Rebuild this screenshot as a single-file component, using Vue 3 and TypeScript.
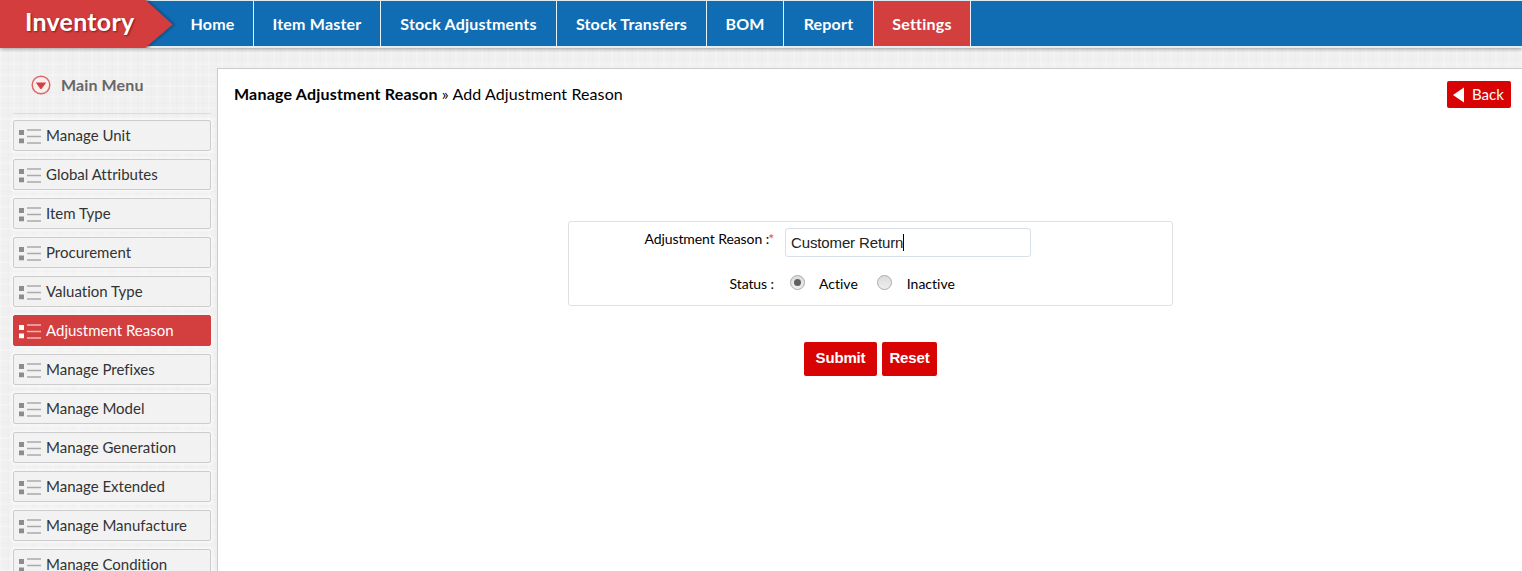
<script setup lang="ts">
import { ref } from 'vue'

interface NavItem {
  label: string
  width: number
  active?: boolean
}

const navItems: NavItem[] = [
  { label: 'Home', width: 82 },
  { label: 'Item Master', width: 127 },
  { label: 'Stock Adjustments', width: 176 },
  { label: 'Stock Transfers', width: 150 },
  { label: 'BOM', width: 77 },
  { label: 'Report', width: 90 },
  { label: 'Settings', width: 97, active: true },
]

const menuItems: string[] = [
  'Manage Unit',
  'Global Attributes',
  'Item Type',
  'Procurement',
  'Valuation Type',
  'Adjustment Reason',
  'Manage Prefixes',
  'Manage Model',
  'Manage Generation',
  'Manage Extended',
  'Manage Manufacture',
  'Manage Condition',
]
const currentMenu = ref('Adjustment Reason')
const status = ref('Active')
const statuses = ['Active', 'Inactive']
const reason = ref('Customer Return')
</script>

<template>
  <div class="page">
    <header class="topbar">
      <div class="brand">
        <svg class="brand-shape" width="182" height="48" viewBox="0 0 182 48">
          <defs>
            <filter id="brandShadow" x="-5%" y="-20%" width="115%" height="140%">
              <feDropShadow dx="2" dy="0" stdDeviation="1.5" flood-color="#10304c" flood-opacity="0.65" />
            </filter>
          </defs>
          <path d="M-6 -6H138L145.500 0L172.500 24.500L145 48L138 54H-6Z" fill="#d33e3e" filter="url(#brandShadow)" />
        </svg>
        <span class="brand-name">Inventory</span>
      </div>
      <nav class="nav">
        <a
          v-for="item in navItems"
          :key="item.label"
          class="nav-item"
          :class="{ active: item.active }"
          :style="{ width: item.width + 'px' }"
        >{{ item.label }}</a>
      </nav>
    </header>

    <div class="body">
      <aside class="sidebar">
        <div class="menu-title">
          <svg width="20" height="20" viewBox="0 0 20 20">
            <circle cx="10" cy="10" r="8.800" fill="#f8eeee" stroke="#dc6868" stroke-width="1.500" />
            <path d="M4.800 7.600H15.200L10.900 13.500Q10 14.500 9.100 13.500Z" fill="#d33e3e" />
          </svg>
          <span>Main Menu</span>
        </div>
        <ul class="menu">
          <li
            v-for="label in menuItems"
            :key="label"
            class="menu-item"
            :class="{ active: label === currentMenu }"
          >
            <svg class="list-icon" width="22" height="16" viewBox="0 0 22 16">
              <path class="squares" d="M0 2H5V7H0ZM0 10.500H5V15.300H0Z" />
              <path class="lines" d="M8 2H22M8 8.500H22M8 15H22" />
            </svg>
            <span>{{ label }}</span>
          </li>
        </ul>
      </aside>

      <main class="content">
        <div class="heading">
          <div class="crumbs"><b>Manage Adjustment Reason</b> » Add Adjustment Reason</div>
          <button class="back" type="button">
            <svg width="12" height="16" viewBox="0 0 12 16"><path d="M0 8L11 .5V15.500Z" fill="#fff" /></svg>
            <span>Back</span>
          </button>
        </div>
        <form class="form" @submit.prevent>
          <div class="panel">
            <div class="row reason-row">
              <label class="label">Adjustment Reason :<span class="star">*</span></label>
              <div class="field"><span>{{ reason }}</span><i class="caret"></i></div>
            </div>
            <div class="row status-row">
              <span class="label status-label">Status :</span>
              <label v-for="s in statuses" :key="s" class="choice">
                <i class="radio" :class="{ checked: s === status }"></i>
                <span>{{ s }}</span>
              </label>
            </div>
          </div>
          <div class="actions">
            <button class="submit" type="submit">Submit</button>
            <button class="reset" type="button">Reset</button>
          </div>
        </form>
      </main>
    </div>
  </div>
</template>

<style>
body {
  margin: 0;
  overflow: hidden;
}
</style>

<style scoped>
.page {
  height: 571px;
  overflow: hidden;
  display: flex;
  flex-direction: column;
  font-family: Lato, "Liberation Sans", sans-serif;
  font-variant-ligatures: none;
  color: #000;
  background-color: #f0f0f0;
  background-image:
    repeating-linear-gradient(90deg, rgba(255, 255, 255, .18) 0 2px, transparent 2px 7px, rgba(0, 0, 0, .006) 7px 9px, transparent 9px 13px),
    repeating-linear-gradient(0deg, rgba(255, 255, 255, .2) 0 2px, transparent 2px 5px, rgba(0, 0, 0, .006) 5px 6px, transparent 6px 11px);
}
.topbar {
  box-sizing: border-box;
  flex: none;
  position: relative;
  z-index: 1;
  height: 48px;
  display: flex;
  border-top: 1px solid #dcebf2;
  border-bottom: 2px solid #e6eef2;
  background: #116db3;
  box-shadow: 0 1px 4px rgba(0, 0, 0, .35);
}
.brand {
  width: 172px;
  height: 48px;
  margin-top: -1px;
  position: relative;
}
.brand-shape {
  position: absolute;
  left: 0;
  top: 0;
}
.brand-name {
  position: absolute;
  left: 25px;
  top: 6px;
  font-size: 25px;
  letter-spacing: .25px;
  line-height: 30px;
  font-weight: 700;
  color: #fff;
  text-shadow: 1px 1px 2px rgba(80, 0, 0, .6);
}
.nav {
  display: flex;
  height: 45px;
}
.nav-item {
  box-sizing: border-box;
  border-right: 1px solid #e6f2fa;
  color: #fff;
  font-size: 16px;
  letter-spacing: .2px;
  line-height: 46px;
  font-weight: 700;
  text-align: center;
  white-space: nowrap;
}
.nav-item.active {
  background: #d33e3e;
  background-clip: padding-box;
}
.body {
  flex: 1;
  min-height: 0;
  display: flex;
}
.sidebar {
  width: 199px;
  padding: 0 5px 0 13px;
  flex: none;
}
.menu-title {
  height: 64px;
  width: 198px;
  box-sizing: border-box;
  padding: 10px 0 0 18px;
  display: flex;
  align-items: center;
  gap: 10px;
  font-size: 16px;
  letter-spacing: .12px;
  font-weight: 700;
  color: #666;
  border-bottom: 1px solid #dcdcdc;
  margin-bottom: 8px;
  margin-top: 2px;
}
.menu-title svg,
.menu-title span {
  margin-top: -4px;
}
.menu {
  list-style: none;
  margin: -2px 0 0;
  padding: 0;
  width: 198px;
  display: flex;
  flex-direction: column;
  gap: 8px;
}
.menu-item {
  box-sizing: border-box;
  height: 31px;
  border: 1px solid #ccc;
  border-radius: 2px;
  background: #f2f2f2;
  box-shadow: 0 0 3px 2px rgba(250, 250, 250, .8);
  display: flex;
  align-items: flex-start;
  padding-left: 5px;
  gap: 5px;
  font-size: 15px;
  line-height: 28px;
  color: #333;
}
.squares {
  fill: #8d8d8d;
}
.lines {
  stroke: #aaa;
  stroke-width: 1.6;
  fill: none;
}
.list-icon {
  margin-top: 7px;
}
.menu-item.active {
  background: #d33e3e;
  border-color: #d33e3e;
  color: #fff;
}
.active .squares {
  fill: #fff;
}
.active .lines {
  stroke: #efb7b7;
}
.content {
  flex: 1;
  min-width: 0;
  margin-top: 20px;
  border: solid #ccc;
  border-width: 1px 0 0 1px;
  background: #fff;
}
.heading {
  height: 39px;
  padding: 12px 11px 0 16px;
  box-sizing: border-box;
  display: flex;
  justify-content: space-between;
  font-size: 16px;
}
.crumbs {
  line-height: 25px;
  letter-spacing: .1px;
}
.crumbs b {
  letter-spacing: .2px;
}
.back {
  width: 64px;
  height: 27px;
  border: 0;
  border-radius: 2px;
  background: #d80404;
  color: #fff;
  font: 15px/26px Lato, sans-serif;
  display: flex;
  align-items: center;
  padding: 0 0 0 6px;
  gap: 7px;
}
.back span {
  margin-top: -1px;
}
.form {
  width: 605px;
  margin: 113px 0 0 350px;
}
.panel {
  box-sizing: border-box;
  height: 85px;
  border: 1px solid #e0e0e0;
  border-radius: 3px;
  padding-top: 6px;
  font-size: 14px;
}
.row {
  display: flex;
}
.reason-row {
  height: 47px;
}
.label {
  width: 205px;
  text-align: right;
  line-height: 22px;
  letter-spacing: -.08px;
  margin-right: 11px;
}
.star {
  color: #d9534f;
  font-size: 14px;
  line-height: 1;
  margin-left: -1px;
}
.field {
  box-sizing: border-box;
  width: 246px;
  height: 29px;
  border: 1px solid #d9dfe6;
  border-radius: 3px;
  padding-left: 5px;
  display: flex;
  align-items: center;
  font: 15px "Liberation Sans", sans-serif;
  letter-spacing: -.13px;
  color: #222;
}
.caret {
  width: 1px;
  height: 17px;
  background: #000;
}
.status-row {
  line-height: 18px;
}
.status-label {
  margin-right: 16px;
  line-height: 18px;
}
.choice {
  display: flex;
  gap: 14px;
  margin-right: 19px;
}
.choice + .choice {
  gap: 15px;
}
.radio {
  box-sizing: border-box;
  width: 15px;
  height: 15px;
  border: 1px solid #aaa;
  border-radius: 50%;
  background: linear-gradient(#dcdcdc, #eee);
  display: flex;
  align-items: center;
  justify-content: center;
}
.radio.checked::after {
  content: "";
  width: 7px;
  height: 7px;
  border-radius: 50%;
  background: #606060;
}
.actions {
  display: flex;
  justify-content: center;
  gap: 5px;
  margin-top: 36px;
}
.submit,
.reset {
  height: 34px;
  padding: 0 0 3px;
  border: 0;
  border-radius: 2px;
  background: #d80404;
  color: #fff;
  font: bold 15px "Liberation Sans", sans-serif;
  letter-spacing: -.15px;
}
.submit {
  width: 73px;
}
.reset {
  width: 55px;
}
</style>
